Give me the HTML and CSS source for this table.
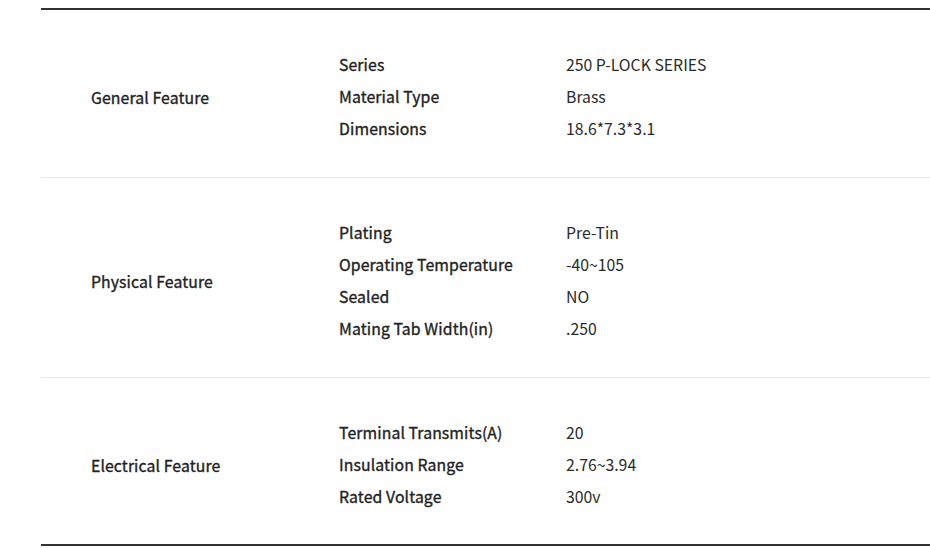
FILE: index.html
```html
<!DOCTYPE html>
<html>
<head>
<meta charset="utf-8">
<link rel="stylesheet" href="styles.css">
</head>
<body>
<div class="spec">
  <div class="group">
    <div class="cat">General Feature</div>
    <div class="items">
      <div class="item"><span class="label">Series</span><span class="value">250 P-LOCK SERIES</span></div>
      <div class="item"><span class="label">Material Type</span><span class="value">Brass</span></div>
      <div class="item"><span class="label">Dimensions</span><span class="value">18.6*7.3*3.1</span></div>
    </div>
  </div>
  <div class="group">
    <div class="cat">Physical Feature</div>
    <div class="items">
      <div class="item"><span class="label">Plating</span><span class="value">Pre-Tin</span></div>
      <div class="item"><span class="label">Operating Temperature</span><span class="value">-40~105</span></div>
      <div class="item"><span class="label">Sealed</span><span class="value">NO</span></div>
      <div class="item"><span class="label">Mating Tab Width(in)</span><span class="value">.250</span></div>
    </div>
  </div>
  <div class="group">
    <div class="cat">Electrical Feature</div>
    <div class="items">
      <div class="item"><span class="label">Terminal Transmits(A)</span><span class="value">20</span></div>
      <div class="item"><span class="label">Insulation Range</span><span class="value">2.76~3.94</span></div>
      <div class="item"><span class="label">Rated Voltage</span><span class="value">300v</span></div>
    </div>
  </div>
</div>
</body>
</html>
```
FILE: styles.css
```css
html, body {
  margin: 0;
  padding: 0;
  background: #fff;
}
body {
  font-family: "Noto Sans CJK KR", "Noto Sans", sans-serif;
  font-size: 15.8px;
  color: #222;
  overflow: hidden;
}
.spec {
  margin: 8px 0 0 41px;
  width: 889px;
  border-top: 2px solid #333;
  border-bottom: 2px solid #333;
}
.group {
  display: flex;
  align-items: center;
  padding: 39px 0 32px;
  border-bottom: 1px solid #e8e8e8;
}
.group:last-child {
  padding-bottom: 31px;
  border-bottom: none;
}
.cat {
  width: 248px;
  padding-left: 50px;
  font-weight: 400;
  letter-spacing: 0.1px;
  -webkit-text-stroke: 0.35px #222;
}
.items {
  display: flex;
  flex-direction: column;
}
.item {
  display: flex;
  line-height: 32px;
}
.label {
  width: 227px;
  font-weight: 400;
  letter-spacing: 0.1px;
  -webkit-text-stroke: 0.35px #222;
}
.value {
  font-weight: 400;
  color: #2a2a2a;
}
```
